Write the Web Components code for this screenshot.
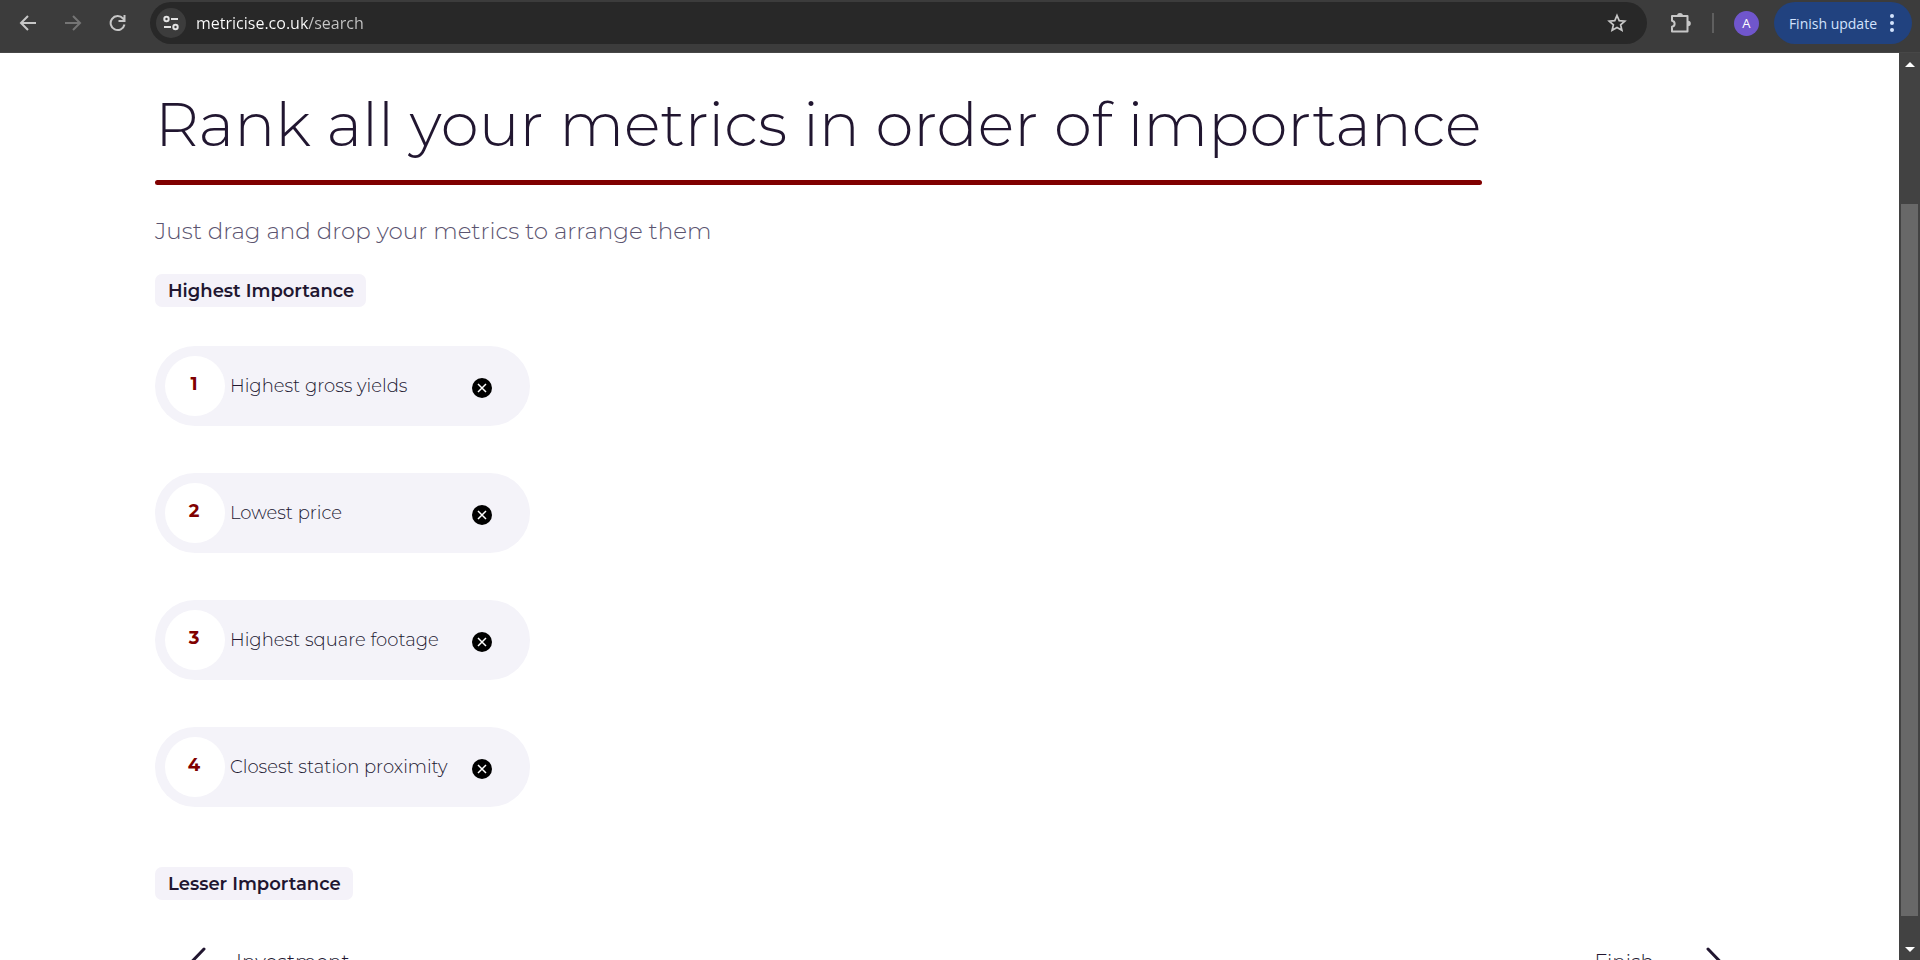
<!DOCTYPE html>
<html lang="en">
<head>
<meta charset="UTF-8">
<meta name="viewport" content="width=device-width, initial-scale=1.0">
<title>Metricise - Search</title>
<style>
    body {
        margin: 0;
        height: 100vh;
        overflow: hidden;
        font-family: Montserrat, Inter, sans-serif;
        color: #211630;
        background-color: #fff;
    }
</style>
</head>
<body>
<browser-window>
    <browser-toolbar slot="toolbar" site="metricise.co.uk" path="/search" user="A"></browser-toolbar>
    <rank-page>
        <span slot="title">Rank all your metrics in order of importance</span>
        <span slot="subtitle">Just drag and drop your metrics to arrange them</span>
        <importance-badge slot="highest">Highest Importance</importance-badge>
        <metric-item rank="1">Highest gross yields</metric-item>
        <metric-item rank="2">Lowest price</metric-item>
        <metric-item rank="3">Highest square footage</metric-item>
        <metric-item rank="4">Closest station proximity</metric-item>
        <importance-badge slot="lesser">Lesser Importance</importance-badge>
        <step-button slot="nav" direction="back">Investment</step-button>
        <step-button slot="nav" direction="next">Finish</step-button>
    </rank-page>
    <scroll-rail slot="rail"></scroll-rail>
</browser-window>

<script>
class BrowserWindow extends HTMLElement {
    connectedCallback() {
        this.attachShadow({ mode: "open" });
        this.shadowRoot.innerHTML = /*HTML */ `
<style>
    :host {
        display: grid;
        grid-template-rows: auto minmax(0, 1fr);
        height: 100%;
    }

    .view {
        display: grid;
        grid-template-columns: minmax(0, 1fr) auto;
        min-height: 0;
    }

    .content {
        overflow: hidden;
    }
</style>
        <slot name="toolbar"></slot>
        <div class="view">
            <div class="content"><slot></slot></div>
            <slot name="rail"></slot>
        </div>
        `;
    }
}

class BrowserToolbar extends HTMLElement {
    connectedCallback() {
        this.attachShadow({ mode: "open" });
        this.render();
    }

    render() {
        const site = this.getAttribute("site");
        const path = this.getAttribute("path");

        this.shadowRoot.innerHTML = /*HTML */ `
<style>
    :host {
        display: flex;
        align-items: center;
        box-sizing: border-box;
        height: 53px;
        padding: 0 8px 6px 8px;
        background-color: #3c3c3c;
        border-bottom: 1px solid #474747;
        font-family: "Segoe UI", "Open Sans", sans-serif;
    }

    button {
        display: grid;
        place-items: center;
        flex: none;
        padding: 0;
        border: none;
        background: none;
        color: #c7c7c7;
        font-family: inherit;
        cursor: pointer;
    }

    svg {
        display: block;
        fill: none;
        stroke: currentColor;
        stroke-width: 2;
    }

    .nav {
        display: flex;
        gap: 5px;
        margin-right: 12px;
    }

    .nav button {
        width: 40px;
        height: 40px;
    }

    .nav button:disabled {
        color: #757575;
    }

    .omnibox {
        display: flex;
        align-items: center;
        flex: 1;
        box-sizing: border-box;
        height: 42px;
        padding: 0 14px 0 6px;
        border-radius: 21px;
        background-color: #282828;
    }

    .omnibox .site-info {
        width: 30px;
        height: 30px;
        border-radius: 50%;
        background-color: #3c3c3c;
        color: #e3e3e3;
    }

    /* the host is brighter than the path */
    input {
        flex: 1;
        min-width: 0;
        margin-left: 10px;
        padding: 0;
        border: none;
        outline: none;
        font-family: inherit;
        font-size: 16px;
        line-height: 30px;
        color: #fff;
        background: linear-gradient(90deg, #fff 112px, #c7c7c7 112px);
        -webkit-background-clip: text;
        background-clip: text;
        -webkit-text-fill-color: transparent;
    }

    .star, .extensions {
        width: 32px;
        height: 32px;
    }

    .extensions {
        margin-left: 18px;
    }

    .divider {
        width: 2px;
        height: 20px;
        margin: 0 20px 0 15px;
        background-color: #5f5f5f;
    }

    .profile {
        width: 25px;
        height: 25px;
        border-radius: 50%;
        background-color: #7056cc;
        color: #fff;
        font-size: 13px;
    }

    .update {
        display: flex;
        align-items: center;
        gap: 13px;
        height: 42px;
        margin-left: 15px;
        padding: 0 18px 0 15px;
        border-radius: 21px;
        background-color: #21427f;
        color: #d3e3fd;
        font-size: 14px;
    }

    .update svg {
        fill: currentColor;
        stroke: none;
    }
</style>
        <div class="nav">
            <button aria-label="Back"><svg width="18" height="18" viewBox="0 0 18 18"><path d="M17 9H2M9 2 2 9l7 7"/></svg></button>
            <button aria-label="Forward" disabled><svg width="18" height="18" viewBox="0 0 18 18"><path d="M1 9h15M9 2l7 7-7 7"/></svg></button>
            <button aria-label="Reload"><svg width="18" height="18" viewBox="0 0 18 18"><path d="M15.500 10.500A7 7 0 1 1 14 4.500L15.500 6M15.500 1v6h-6"/></svg></button>
        </div>
        <div class="omnibox">
            <button class="site-info" aria-label="View site information">
                <svg width="18" height="18" viewBox="0 0 18 18"><circle cx="4.500" cy="5" r="2.200"/><path d="M9 5h7M2 13h7"/><circle cx="13.500" cy="13" r="2.200"/></svg>
            </button>
            <input type="text" aria-label="Address" value="${site}${path}" spellcheck="false">
            <button class="star" aria-label="Bookmark this tab">
                <svg width="20" height="20" viewBox="0 0 20 20"><path stroke-width="1.700" d="M10 2.500l2.200 5.100 5.600.5-4.200 3.700 1.300 5.500-4.900-2.900-4.900 2.900 1.300-5.500-4.200-3.700 5.600-.5z"/></svg>
            </button>
        </div>
        <button class="extensions" aria-label="Extensions">
            <svg width="22" height="22" viewBox="0 0 22 22">
                <path stroke-linejoin="round" d="M2 4h15.500v15.500H2v-4.700c3.500-.6 3.500-5.400 0-6z"/>
                <path fill="currentColor" stroke="none" d="M7 4a3 3 0 0 1 6 0zM18 8.700a2.800 2.800 0 0 1 0 5.600z"/>
            </svg>
        </button>
        <span class="divider"></span>
        <button class="profile" aria-label="Profile">${this.getAttribute("user")}</button>
        <button class="update">Finish update
            <svg width="4" height="18" viewBox="0 0 4 18"><circle cx="2" cy="2" r="2"/><circle cx="2" cy="9" r="2"/><circle cx="2" cy="16" r="2"/></svg>
        </button>
        `;
    }
}

class ScrollRail extends HTMLElement {
    connectedCallback() {
        this.attachShadow({ mode: "open" });
        this.shadowRoot.innerHTML = /*HTML */ `
<style>
    :host {
        display: flex;
        flex-direction: column;
        width: 21px;
        background-color: #424242;
    }

    button {
        display: grid;
        place-items: center;
        height: 22px;
        padding: 0;
        border: none;
        background: none;
    }

    svg {
        display: block;
        fill: #fff;
    }

    .track {
        display: grid;
        grid-template-rows: 129fr 712fr 22fr;
        flex: 1;
        padding: 0 2px;
    }

    .thumb {
        grid-row: 2;
        background-color: #686868;
    }
</style>
        <button aria-label="Scroll up"><svg width="10" height="5" viewBox="0 0 10 5"><path d="M0 5 5 0l5 5z"/></svg></button>
        <div class="track"><div class="thumb"></div></div>
        <button aria-label="Scroll down"><svg width="10" height="5" viewBox="0 0 10 5"><path d="M0 0l5 5 5-5z"/></svg></button>
        `;
    }
}

class RankPage extends HTMLElement {
    connectedCallback() {
        this.attachShadow({ mode: "open" });
        this.shadowRoot.innerHTML = /*HTML */ `
<style>
    :host {
        display: block;
        padding: 38px 155px 0;
    }

    h1 {
        width: fit-content;
        margin: 0;
        font-size: 61px;
        font-weight: 300;
        line-height: 66px;
    }

    h1::after {
        content: "";
        display: block;
        height: 5px;
        margin-top: 23px;
        border-radius: 3px;
        background-color: #800000;
    }

    p {
        margin: 31px 0 27px;
        font-size: 23px;
        font-weight: 300;
        line-height: 31px;
        color: #5b5470;
    }

    .list {
        display: grid;
        justify-content: start;
        gap: 47px;
        margin: 39px 0 60px;
    }

    nav {
        display: flex;
        justify-content: space-between;
        margin-top: 46px;
        padding: 0 22px 0 35px;
    }
</style>
        <h1><slot name="title"></slot></h1>
        <p><slot name="subtitle"></slot></p>
        <slot name="highest"></slot>
        <div class="list" role="list"><slot></slot></div>
        <slot name="lesser"></slot>
        <nav><slot name="nav"></slot></nav>
        `;
        this.enableDragging();
    }

    enableDragging() {
        this.addEventListener("dragstart", (e) => {
            this.dragged = e.target.closest("metric-item");
        });
        this.addEventListener("dragover", (e) => e.preventDefault());
        this.addEventListener("drop", (e) => {
            const target = e.target.closest("metric-item");
            if (!target || !this.dragged || target === this.dragged) return;
            const down = Number(this.dragged.getAttribute("rank")) < Number(target.getAttribute("rank"));
            if (down) target.after(this.dragged);
            else target.before(this.dragged);
            this.updateRanks();
        });
        this.addEventListener("metric-remove", (e) => {
            e.target.remove();
            this.updateRanks();
        });
    }

    updateRanks() {
        this.querySelectorAll("metric-item").forEach((item, i) => item.setAttribute("rank", i + 1));
    }
}

class ImportanceBadge extends HTMLElement {
    connectedCallback() {
        this.attachShadow({ mode: "open" });
        this.shadowRoot.innerHTML = /*HTML */ `
<style>
    :host {
        display: block;
        width: fit-content;
        padding: 2px 12px 0 13px;
        border-radius: 7px;
        background-color: #f4f2f9;
        font-size: 18px;
        font-weight: 600;
        line-height: 31px;
    }
</style>
        <slot></slot>
        `;
    }
}

class MetricItem extends HTMLElement {
    static observedAttributes = ["rank"];

    connectedCallback() {
        if (this.shadowRoot) return;
        this.attachShadow({ mode: "open" });
        this.draggable = true;
        this.setAttribute("role", "listitem");
        this.render();
    }

    render() {
        this.shadowRoot.innerHTML = /*HTML */ `
<style>
    :host {
        display: flex;
        align-items: center;
        box-sizing: border-box;
        width: 375px;
        height: 80px;
        padding: 0 38px 0 10px;
        border-radius: 40px;
        background-color: #f4f3f9;
        font-size: 18px;
        font-weight: 300;
        cursor: grab;
    }

    .rank {
        flex: none;
        box-sizing: border-box;
        width: 60px;
        height: 60px;
        padding-right: 2px;
        border-radius: 50%;
        background-color: #fff;
        color: #800000;
        font-weight: 700;
        line-height: 57px;
        text-align: center;
    }

    .label {
        flex: 1;
        margin-left: 5px;
    }

    button {
        padding: 4px 0 0;
        border: none;
        background: none;
        cursor: pointer;
    }

    svg {
        display: block;
    }
</style>
        <span class="rank">${this.getAttribute("rank")}</span>
        <span class="label"><slot></slot></span>
        <button aria-label="Remove metric">
            <svg width="20" height="20" viewBox="0 0 20 20"><circle cx="10" cy="10" r="10" fill="#000"/><path d="M6 6l8 8M14 6l-8 8" stroke="#fff" stroke-width="1.500"/></svg>
        </button>
        `;
        this.$rank = this.shadowRoot.querySelector(".rank");
        this.shadowRoot.querySelector("button").addEventListener("click", () => {
            this.dispatchEvent(new CustomEvent("metric-remove", { bubbles: true }));
        });
    }

    attributeChangedCallback(name, oldValue, newValue) {
        if (this.$rank) this.$rank.textContent = newValue;
    }
}

class StepButton extends HTMLElement {
    connectedCallback() {
        this.attachShadow({ mode: "open" });
        const back = this.getAttribute("direction") === "back";
        const arrow = back
            ? `<svg width="17" height="32" viewBox="0 0 17 32"><path d="M14 3 1.500 16 14 29"/></svg>`
            : `<svg width="17" height="32" viewBox="0 0 17 32"><path d="M3 3l12.500 13L3 29"/></svg>`;

        this.shadowRoot.innerHTML = /*HTML */ `
<style>
    :host {
        display: block;
    }

    button {
        display: flex;
        align-items: center;
        gap: ${back ? 29 : 51}px;
        padding: 0;
        border: none;
        background: none;
        color: inherit;
        font-family: inherit;
        font-size: 20px;
        font-weight: 300;
        line-height: 32px;
        cursor: pointer;
    }

    svg {
        display: block;
        fill: none;
        stroke: currentColor;
        stroke-width: 3;
        stroke-linecap: round;
    }
</style>
        <button>${back ? arrow : ""}<slot></slot>${back ? "" : arrow}</button>
        `;
    }
}

customElements.define("browser-window", BrowserWindow);
customElements.define("browser-toolbar", BrowserToolbar);
customElements.define("scroll-rail", ScrollRail);
customElements.define("rank-page", RankPage);
customElements.define("importance-badge", ImportanceBadge);
customElements.define("metric-item", MetricItem);
customElements.define("step-button", StepButton);
</script>
</body>
</html>
